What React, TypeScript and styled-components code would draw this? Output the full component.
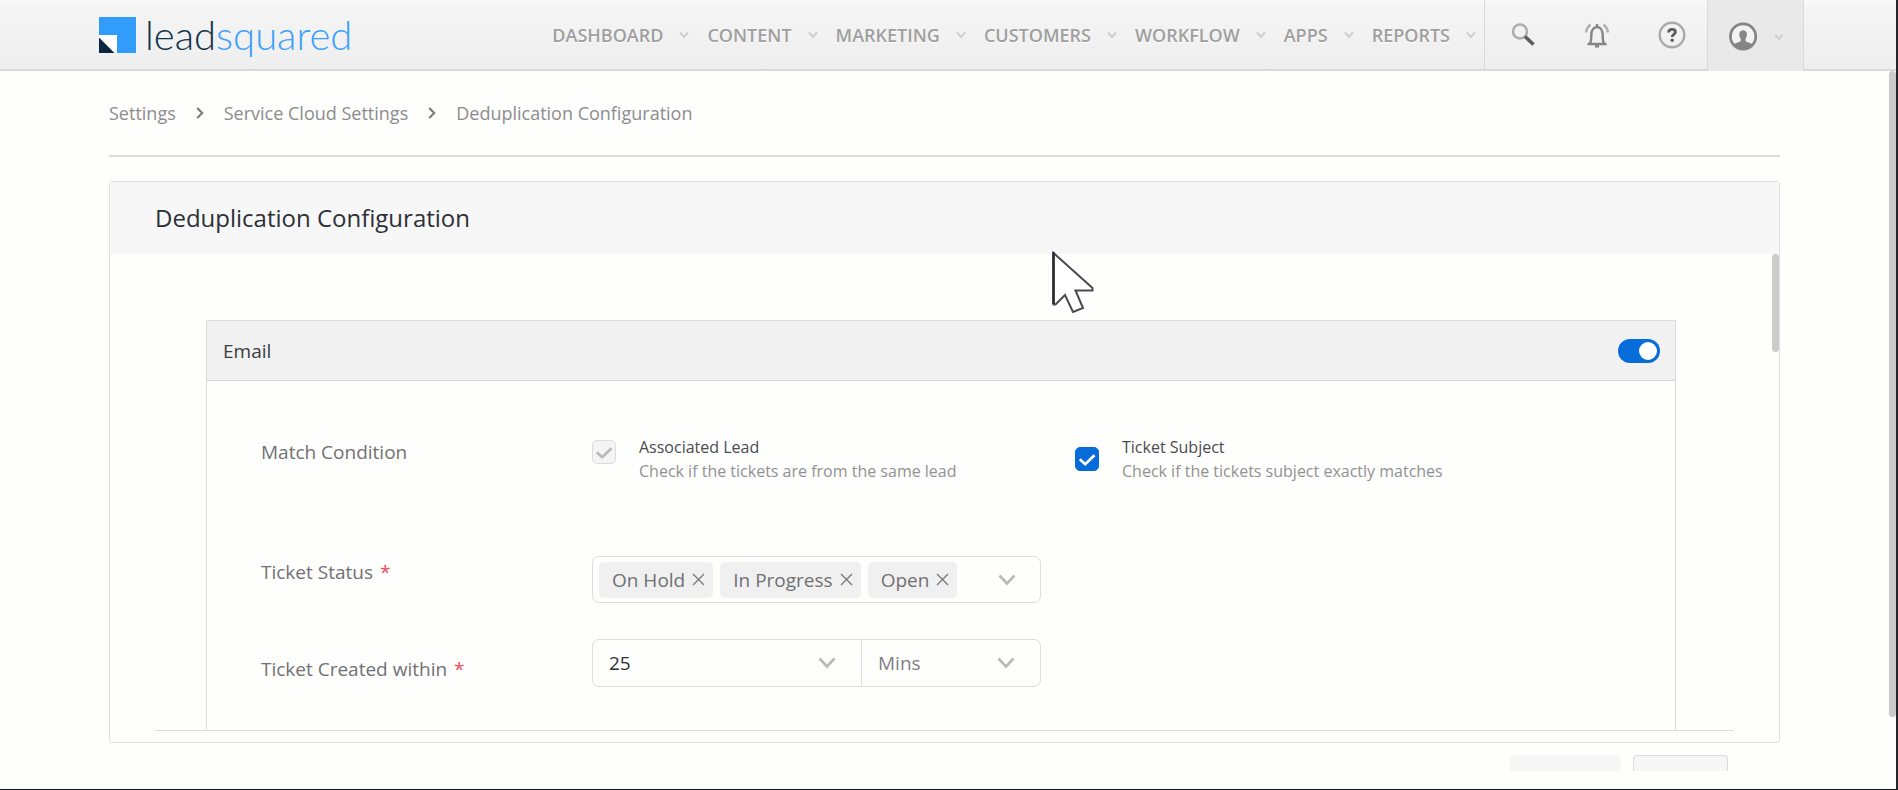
import React from "react";
import styled, { createGlobalStyle } from "styled-components";

const sans = `"Open Sans", "Noto Sans", "Liberation Sans", sans-serif`;

const GlobalStyle = createGlobalStyle`
  *, *::before, *::after { box-sizing: border-box; }
  body { margin: 0; background: #fefefd; font-family: ${sans}; }
  button, input, select { font: inherit; margin: 0; }
`;

const Frame = styled.div`
  display: flex;
  flex-direction: column;
  height: 100vh;
  min-height: 480px;
  min-width: 1400px;
  overflow: hidden;
  background: #fefefd;
  border-right: 2px solid #25252b;
  border-bottom: 1px solid #15151f;
`;

const Header = styled.header`
  display: flex;
  flex: none;
  height: 71px;
  padding: 0 92px 0 99px;
  background: linear-gradient(#fafafa, #f5f5f5 8%, #eeeeee);
  border-bottom: 2px solid #d9d9dc;
`;

const Logo = styled.a`
  display: flex;
  align-items: center;
  gap: 9px;
  color: #12324a;
  font-family: Lato, sans-serif;
  font-size: 40px;
  font-weight: 300;
  line-height: 48px;
  text-decoration: none;
`;

const LogoAccent = styled.span`
  color: #3ba0fb;
`;

const Nav = styled.nav`
  display: flex;
  flex: 1;
  justify-content: flex-end;
  gap: 18px;
  padding-right: 8px;
`;

const NavLink = styled.a`
  display: flex;
  align-items: center;
  gap: 16px;
  color: #9f9f9f;
  font-size: 18px;
  font-weight: 600;
  line-height: 24px;
  text-decoration: none;
  text-shadow: 0 1px 0 #ffffff;
`;

const Tools = styled.div`
  display: flex;
  align-items: center;
  justify-content: space-between;
  width: 223px;
  padding: 0 21px 0 25px;
  border-left: 1px solid #d9d9dc;
`;

const IconButton = styled.button`
  display: flex;
  padding: 0;
  border: 0;
  background: none;
`;

const Profile = styled.button`
  display: flex;
  align-items: center;
  gap: 17px;
  width: 97px;
  height: 71px;
  padding: 2px 19px 0 21px;
  border: 1px solid #d9d9dc;
  border-width: 0 1px;
  background: #e9e9e9;
`;

const Main = styled.main`
  position: relative;
  display: flex;
  flex: 1;
  flex-direction: column;
  min-height: 0;
  padding: 0 116px 18px 109px;
`;

const Breadcrumbs = styled.nav`
  display: flex;
  flex: none;
  align-items: center;
  gap: 20px;
  height: 86px;
  border-bottom: 2px solid #dadbdd;
`;

const Crumb = styled.a`
  color: #8c8c8e;
  font-size: 18px;
  line-height: 24px;
  text-decoration: none;
`;

const Card = styled.section`
  display: flex;
  flex: 1;
  flex-direction: column;
  min-height: 0;
  margin-top: 24px;
  padding-bottom: 11px;
  border: 1px solid #dfe0e3;
  border-radius: 3px;
`;

const CardTitle = styled.h1`
  flex: none;
  margin: 0;
  padding: 20px 45px;
  background: #f7f7f8;
  color: #2d3036;
  font-size: 24px;
  font-weight: 400;
  line-height: 32px;
`;

const ScrollArea = styled.div`
  position: relative;
  flex: 1;
  min-height: 0;
  overflow: hidden;
  padding: 66px 103px 0 96px;
`;

const CardRule = styled.hr`
  flex: none;
  width: calc(100% - 90px);
  height: 1px;
  margin: 0 45px;
  border: 0;
  background: #dcdde0;
`;

const ScrollThumb = styled.div<{ $length: string }>`
  position: absolute;
  top: 0;
  right: 0;
  width: 7px;
  height: ${(p) => p.$length};
  border-radius: 4px;
  background: #cbcbcb;
`;

const Group = styled.section`
  border: 1px solid #d9dadd;
`;

const GroupHeader = styled.header`
  display: flex;
  align-items: center;
  justify-content: space-between;
  height: 60px;
  padding: 0 15px 0 16px;
  border-bottom: 1px solid #d9dadd;
  background: #f1f1f1;
`;

const GroupTitle = styled.h2`
  margin: 0;
  color: #3a3b3f;
  font-size: 19px;
  font-weight: 400;
  line-height: 24px;
`;

const Toggle = styled.input`
  appearance: none;
  display: flex;
  align-items: center;
  justify-content: flex-end;
  width: 42px;
  height: 24px;
  padding: 3px;
  border-radius: 12px;
  background: #056cd9;

  &::before {
    content: "";
    width: 18px;
    height: 18px;
    border-radius: 50%;
    background: #ffffff;
  }
`;

const GroupBody = styled.div`
  padding: 54px 54px 120px;
`;

const Row = styled.div<{ $space: number }>`
  display: grid;
  grid-template-columns: 331px 1fr;
  min-height: 48px;
  margin-bottom: ${(p) => p.$space}px;
`;

const RowLabel = styled.label<{ $drop: number }>`
  padding-top: ${(p) => p.$drop}px;
  color: #707174;
  font-size: 19px;
  line-height: 24px;
`;

const Required = styled.span`
  margin-left: 7px;
  color: #e74c5e;
`;

const Options = styled.div`
  display: grid;
  grid-template-columns: 483px 1fr;
`;

const Option = styled.label<{ $align: string }>`
  display: flex;
  align-items: ${(p) => p.$align};
  gap: 23px;
`;

const OptionText = styled.span`
  display: flex;
  flex-direction: column;
  color: #919193;
  font-size: 16px;
  line-height: 24px;
`;

const OptionName = styled.span`
  color: #4a4b4f;
`;

const CheckCell = styled.span<{ $drop: number }>`
  display: grid;
  margin-top: ${(p) => p.$drop}px;

  & > * { grid-area: 1 / 1; }
`;

const CheckInput = styled.input`
  appearance: none;
  width: 24px;
  height: 24px;
  border: 1px solid #056cd9;
  border-radius: 5px;
  background: #056cd9;

  &:disabled {
    border-color: #dcdcde;
    background: #f4f4f4;
  }
`;

const Field = styled.div<{ $height: number }>`
  display: flex;
  align-items: center;
  width: 449px;
  height: ${(p) => p.$height}px;
  border: 1px solid #dcdde1;
  border-radius: 7px;
`;

const Chips = styled.div`
  display: flex;
  flex: 1;
  gap: 7px;
  padding-left: 6px;
`;

const Chip = styled.span`
  display: flex;
  align-items: center;
  gap: 7px;
  height: 36px;
  padding: 0 8px 0 13px;
  border-radius: 5px;
  background: #f0f0f1;
  color: #707174;
  font-size: 19px;
  line-height: 24px;
`;

const OpenButton = styled(IconButton)`
  padding: 4px 24px;
`;

const SelectCell = styled.div<{ $width: number }>`
  display: grid;
  flex: 0 0 ${(p) => p.$width}px;
  align-items: center;
  height: 100%;

  & > * { grid-area: 1 / 1; }
  & > svg { justify-self: end; margin-right: 25px; pointer-events: none; }
  & + & { border-left: 1px solid #dcdde1; }
`;

const Select = styled.select<{ $ink: string }>`
  appearance: none;
  width: 100%;
  height: 100%;
  padding: 0 16px;
  border: 0;
  background: none;
  color: ${(p) => p.$ink};
  font-size: 19px;
`;

const Footer = styled.footer`
  display: flex;
  flex: none;
  justify-content: flex-end;
  gap: 12px;
  height: 28px;
  padding: 12px 52px 0 0;
  overflow: hidden;
`;

const FooterButton = styled.button<{ $width: number; $line: string }>`
  width: ${(p) => p.$width}px;
  height: 40px;
  border: 1px solid ${(p) => p.$line};
  border-radius: 3px;
  background: #f6f6f7;
`;

const Pointer = styled.svg`
  position: absolute;
  left: 1051px;
  top: 249px;
  pointer-events: none;
`;

const NavCaret = () => (
  <svg width="10" height="8" viewBox="0 0 10 8" fill="none" stroke="#cfcfcf" strokeWidth="2" aria-hidden="true">
    <path d="M1 1.5 5 6l4-4.500" />
  </svg>
);

const FieldCaret = () => (
  <svg width="18" height="12" viewBox="0 0 18 12" fill="none" stroke="#b9babc" strokeWidth="2.600" aria-hidden="true">
    <path d="M1.500 1.500 9 9.500l7.500-8" />
  </svg>
);

const CrumbArrow = () => (
  <svg width="8" height="12" viewBox="0 0 8 12" fill="none" stroke="#77787b" strokeWidth="2" aria-hidden="true">
    <path d="M1.200 1 6.200 6l-5 5" />
  </svg>
);

const Cross = () => (
  <svg width="13" height="13" viewBox="0 0 13 13" fill="none" stroke="#77787b" strokeWidth="1.300" aria-hidden="true">
    <path d="M1 1l11 11M12 1 1 12" />
  </svg>
);

const Tick = ({ color }: { color: string }) => (
  <svg width="24" height="24" viewBox="0 0 24 24" fill="none" stroke={color} strokeWidth="2.800" aria-hidden="true">
    <path d="M4.800 12.200 10.200 17.200 19.500 8.300" />
  </svg>
);

const menu = ["DASHBOARD", "CONTENT", "MARKETING", "CUSTOMERS", "WORKFLOW", "APPS", "REPORTS"];
const crumbs = ["Settings", "Service Cloud Settings", "Deduplication Configuration"];
const statuses = ["On Hold", "In Progress", "Open"];

export default function App() {
  return (
    <>
      <GlobalStyle />
      <Frame>
        <Header>
          <Logo href="#" aria-label="leadsquared">
            <svg width="37" height="36" viewBox="0 0 37 36" aria-hidden="true">
              <path fill="#329cfb" d="M0 0h37v36H18V18H0z" />
              <path fill="#fff" d="M0 18h18v18H0z" />
              <path fill="#0a2740" d="M0 20.500 15.500 36H0z" />
            </svg>
            <span>
              lead<LogoAccent>squared</LogoAccent>
            </span>
          </Logo>
          <Nav aria-label="Main">
            {menu.map((name) => (
              <NavLink href="#" key={name}>
                {name}
                <NavCaret />
              </NavLink>
            ))}
          </Nav>
          <Tools>
            <IconButton aria-label="Search">
              <svg width="26" height="26" viewBox="0 0 26 26" fill="none">
                <circle cx="10" cy="9.500" r="7" stroke="#adadad" strokeWidth="2.600" />
                <path d="M15 14.500 23.500 22.500" stroke="#5c5c5c" strokeWidth="3.600" />
              </svg>
            </IconButton>
            <IconButton aria-label="Notifications">
              <svg width="26" height="26" viewBox="0 0 26 26" fill="none" stroke="#858585" strokeWidth="2.400">
                <path d="M3.500 22h19M6 21.500c1-1.500 1.300-3 1.300-8.500 0-4.500 2-8 5.700-8s5.700 3.500 5.700 8c0 5.500.3 7 1.300 8.500M13 5V2" />
                <path d="M11 24.300h4" />
                <path d="M6.500 2.500C4 4.500 2.500 7 2 10.500M19.500 2.500C22 4.500 23.500 7 24 10.500" stroke="#b0b0b0" />
              </svg>
            </IconButton>
            <IconButton aria-label="Help">
              <svg width="28" height="28" viewBox="0 0 28 28" fill="none">
                <circle cx="14" cy="14" r="12.300" stroke="#a9a9a9" strokeWidth="2.400" />
                <path d="M10.600 11.500c0-2.200 1.500-3.200 3.500-3.200s3.300 1.100 3.300 2.800c0 2.300-3.200 2.400-3.200 4.900" stroke="#5c5c5c" strokeWidth="2.800" />
                <circle cx="14.200" cy="19.200" r="1.700" fill="#5c5c5c" />
              </svg>
            </IconButton>
          </Tools>
          <Profile aria-label="Account">
            <svg width="29" height="29" viewBox="0 0 29 29" fill="none">
              <circle cx="14.500" cy="14.500" r="13" fill="#f3f3f3" />
              <path fill="#858585" d="M14.500 8a4.500 4.500 0 0 1 4 4.500c0 2-.8 3-1.500 4v2.500c1 1.500 5 1.200 7 3.500-2 3-5.500 5-9.500 5S7 25.500 5 22.500c2-2.300 6-2 7-3.500v-2.500c-.7-1-1.500-2-1.500-4A4.500 4.500 0 0 1 14.500 8z" />
              <circle cx="14.500" cy="14.500" r="13" stroke="#858585" strokeWidth="2.800" />
            </svg>
            <NavCaret />
          </Profile>
        </Header>

        <Main>
          <Breadcrumbs aria-label="Breadcrumb">
            {crumbs.map((name, index) => (
              <React.Fragment key={name}>
                {index > 0 && <CrumbArrow />}
                <Crumb href="#">{name}</Crumb>
              </React.Fragment>
            ))}
          </Breadcrumbs>

          <Card>
            <CardTitle>Deduplication Configuration</CardTitle>
            <ScrollArea>
              <Group>
                <GroupHeader>
                  <GroupTitle id="email-title">Email</GroupTitle>
                  <Toggle type="checkbox" role="switch" aria-labelledby="email-title" defaultChecked />
                </GroupHeader>
                <GroupBody>
                  <Row $space={73}>
                    <RowLabel as="span" $drop={5}>Match Condition</RowLabel>
                    <Options>
                      <Option $align="flex-start">
                        <CheckCell $drop={5}>
                          <CheckInput type="checkbox" defaultChecked disabled />
                          <Tick color="#b9babc" />
                        </CheckCell>
                        <OptionText>
                          <OptionName>Associated Lead</OptionName>
                          Check if the tickets are from the same lead
                        </OptionText>
                      </Option>
                      <Option $align="center">
                        <CheckCell $drop={0}>
                          <CheckInput type="checkbox" defaultChecked />
                          <Tick color="#ffffff" />
                        </CheckCell>
                        <OptionText>
                          <OptionName>Ticket Subject</OptionName>
                          Check if the tickets subject exactly matches
                        </OptionText>
                      </Option>
                    </Options>
                  </Row>

                  <Row $space={35}>
                    <RowLabel htmlFor="ticket-status" $drop={4}>
                      Ticket Status<Required>*</Required>
                    </RowLabel>
                    <Field $height={47}>
                      <Chips>
                        {statuses.map((name) => (
                          <Chip key={name}>
                            {name}
                            <IconButton aria-label={`Remove ${name}`}>
                              <Cross />
                            </IconButton>
                          </Chip>
                        ))}
                      </Chips>
                      <OpenButton id="ticket-status" aria-label="Choose ticket status">
                        <FieldCaret />
                      </OpenButton>
                    </Field>
                  </Row>

                  <Row $space={0}>
                    <RowLabel htmlFor="created-amount" $drop={18}>
                      Ticket Created within<Required>*</Required>
                    </RowLabel>
                    <Field $height={48}>
                      <SelectCell $width={268}>
                        <Select id="created-amount" $ink="#2d3036" defaultValue="25">
                          <option>25</option>
                        </Select>
                        <FieldCaret />
                      </SelectCell>
                      <SelectCell $width={179}>
                        <Select aria-label="Time unit" $ink="#7f8083" defaultValue="Mins">
                          <option>Mins</option>
                        </Select>
                        <FieldCaret />
                      </SelectCell>
                    </Field>
                  </Row>
                </GroupBody>
              </Group>
              <ScrollThumb $length="98px" />
            </ScrollArea>
            <CardRule />
          </Card>

          <Footer>
            <FooterButton $width={111} $line="#f6f6f7" aria-label="Cancel" />
            <FooterButton $width={95} $line="#dadbe0" aria-label="Save" />
          </Footer>
          <ScrollThumb $length="90%" />
        </Main>
      </Frame>
      <Pointer width="44" height="64" viewBox="0 0 44 64" aria-hidden="true">
        <path d="M2.500 4v51.500h2L14 46l8 17 10-4-7.500-17.500H41.500V39z" fill="#fff" stroke="#4b4b52" strokeWidth="2" />
        <path d="M2.500 3v52" stroke="#2b2b38" strokeWidth="2.600" />
      </Pointer>
    </>
  );
}
